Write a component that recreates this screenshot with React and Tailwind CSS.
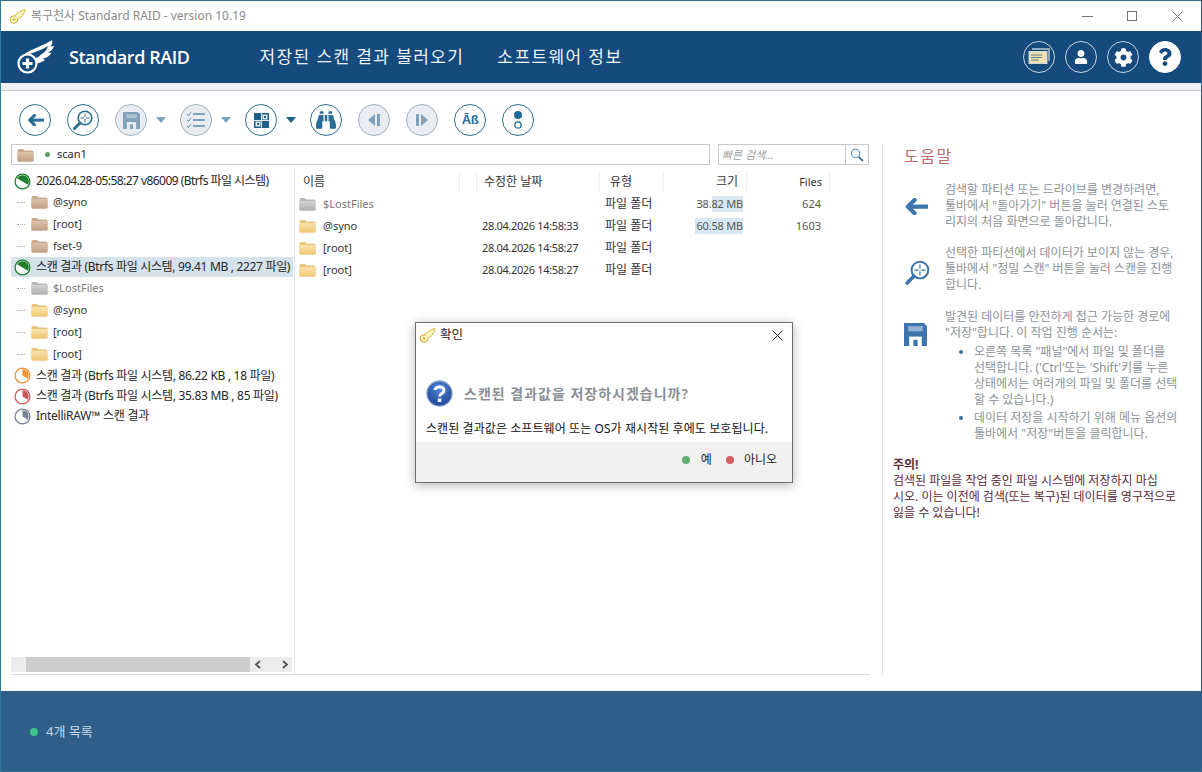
import { FaBinoculars, FaCog, FaUser, FaQuestion } from 'react-icons/fa';

const FONT = "font-['Noto_Sans','Noto_Sans_CJK_KR',sans-serif]";

const treeRows = [
    { kind: 'scan', color: '#1e7f2c', wide: true, text: '2026.04.28-05:58:27 v86009 (Btrfs 파일 시스템)', h: 'h-[20px]', track: 'tracking-[-0.55px]' },
    { kind: 'folder', folder: 'tan', text: '@syno' },
    { kind: 'folder', folder: 'tan', text: '[root]' },
    { kind: 'folder', folder: 'tan', text: 'fset-9' },
    { kind: 'scan', color: '#1e7f2c', wide: true, text: '스캔 결과 (Btrfs 파일 시스템, 99.41 MB , 2227 파일)', h: 'h-[20px]', track: 'tracking-[-0.32px]', selected: true },
    { kind: 'folder', folder: 'gray', text: '$LostFiles', muted: true },
    { kind: 'folder', folder: 'yellow', text: '@syno' },
    { kind: 'folder', folder: 'yellow', text: '[root]' },
    { kind: 'folder', folder: 'yellow', text: '[root]' },
    { kind: 'scan', color: '#ee9233', text: '스캔 결과 (Btrfs 파일 시스템, 86.22 KB , 18 파일)', h: 'h-[21px]', track: 'tracking-[-0.3px]' },
    { kind: 'scan', color: '#cf5b62', text: '스캔 결과 (Btrfs 파일 시스템, 35.83 MB , 85 파일)', h: 'h-[20px]', track: 'tracking-[-0.3px]' },
    { kind: 'scan', color: '#7b8494', text: 'IntelliRAW™ 스캔 결과', h: 'h-[20px]', track: 'tracking-[-0.25px]' },
];

const fileRows = [
    { folder: 'gray', name: '$LostFiles', muted: true, date: '', type: '파일 폴더', size: '38.82 MB', files: '624', hl: 'w-[31px]' },
    { folder: 'yellow', name: '@syno', date: '28.04.2026 14:58:33', type: '파일 폴더', size: '60.58 MB', files: '1603', hl: 'w-[48px]' },
    { folder: 'yellow', name: '[root]', date: '28.04.2026 14:58:27', type: '파일 폴더', size: '', files: '' },
    { folder: 'yellow', name: '[root]', date: '28.04.2026 14:58:27', type: '파일 폴더', size: '', files: '' },
];

const folderColors = {
    tan: ['#dcc3ab', '#c2a083', '#c9a98c'],
    gray: ['#d2d2d2', '#b0b0b0', '#b9b9b9'],
    yellow: ['#fae3ae', '#f1c673', '#e9c47e'],
};

function Folder({ type }) {
    const [top, bottom, tab] = folderColors[type];
    return (
        <svg width="17" height="14" viewBox="0 0 17 14" className="shrink-0">
            <defs>
                <linearGradient id={`folder-${type}`} x1="0" y1="0" x2="0" y2="1">
                    <stop offset="0" stopColor={top} />
                    <stop offset="1" stopColor={bottom} />
                </linearGradient>
            </defs>
            <path d="M0.5 2.5 Q0.5 1 2 1 H6 L7.5 2.5 H15 Q16.5 2.5 16.5 4 V12.5 Q16.5 13.5 15.5 13.5 H1.5 Q0.5 13.5 0.5 12.5 Z" fill={tab} />
            <path d="M0.5 4 H16.5 V12.5 Q16.5 13.5 15.5 13.5 H1.5 Q0.5 13.5 0.5 12.5 Z" fill={`url(#folder-${type})`} />
        </svg>
    );
}

function Pie({ color, wide }) {
    return (
        <svg width="17" height="17" viewBox="0 0 17 17" className="shrink-0">
            <circle cx="8.5" cy="8.5" r="7.4" fill="#fff" stroke={color} strokeWidth="1.3" />
            <path d={wide ? 'M8.5 8.5 L3.04 5.35 A6.3 6.3 0 0 1 13.96 11.65 Z' : 'M8.5 8.5 V2.2 A6.3 6.3 0 0 1 13.96 11.65 Z'} fill={color} />
        </svg>
    );
}

function Wing({ small }) {
    if (small) {
        return (
            <svg width="17" height="17" viewBox="0 0 17 17" className="shrink-0">
                <circle cx="5" cy="11.5" r="3.8" fill="#fff6c8" stroke="#c9a520" strokeWidth="1" />
                <path d="M3.5 11.5 H6.5 M5 10 V13" stroke="#c9a520" strokeWidth="0.9" />
                <path d="M6 7.5 C9 4.5 12 3 16 1.5 C16 4 15 5.5 14 6 C14 7.5 12.5 9 11.5 9 C10.5 10.5 9.5 11 8.5 11" fill="#fff6c8" stroke="#d8b32a" strokeWidth="1" />
            </svg>
        );
    }
    return (
        <svg width="39" height="34" viewBox="0 0 39 34" className="shrink-0">
            <path d="M6 15 C13 9 27 6 35 0 C36 3 35 5 33 6.5 L37 6 C36 9.5 34 11 31 12.5 L34.5 13 C32 16.5 29 18 26 18.5 L28 20 C25 22.5 21 23.5 18 23 L18 20 Z" fill="#fff" />
            <path d="M10 15 C17 12 25 10 31 6 C30 10 27 13 24 14.5 C22 17 19 18.5 15 18.5 Z" fill="#144a7c" />
            <circle cx="10.5" cy="23.5" r="9" fill="#144a7c" stroke="#fff" strokeWidth="2.2" />
            <path d="M5.5 23.5 H15.5 M10.5 18.5 V28.5" stroke="#fff" strokeWidth="3.2" />
        </svg>
    );
}

function ToolButton({ disabled, children }) {
    return (
        <div className={`w-8 h-8 rounded-full border flex items-center justify-center shrink-0 ${disabled ? 'bg-[#e9edf1] border-[#9fb1bf] text-[#7fa2ba]' : 'bg-white border-[#2c6f92] text-[#2a6d94]'}`}>
            {children}
        </div>
    );
}

function Caret({ disabled }) {
    return (
        <div className={`w-0 h-0 -ml-[7px] -mr-[2px] border-x-[5px] border-x-transparent border-t-[6px] ${disabled ? 'border-t-[#7fa2ba]' : 'border-t-[#1f5f8b]'}`} />
    );
}

function Arrow({ width = 17, color = 'currentColor' }) {
    return (
        <svg width={width} height={width * 0.72} viewBox="0 0 25 18" fill="none" stroke={color} strokeWidth="4.4">
            <path d="M25 9 H4" />
            <path d="M11 2 L4 9 L11 16" strokeLinecap="round" strokeLinejoin="round" />
        </svg>
    );
}

function Floppy({ size = 17, color = 'currentColor', bg = '#fff' }) {
    return (
        <svg width={size} height={size} viewBox="0 0 22 22">
            <path d="M0 0 H19 L22 3 V22 H0 Z" fill={color} />
            <rect x="4" y="3" width="14" height="5" fill={bg} opacity="0.45" />
            <rect x="5" y="13" width="12" height="9" fill={bg} />
            <rect x="9" y="16" width="4" height="6" fill={color} />
        </svg>
    );
}

function Magnifier({ size = 22, color = 'currentColor' }) {
    return (
        <svg width={size} height={size} viewBox="0 0 22 22" fill="none" stroke={color}>
            <circle cx="13" cy="9" r="6.8" strokeWidth="1.6" />
            <path d="M13 4.5 V8 M8.5 9 H12 M17.5 9 H14 M13 13.5 V10" strokeWidth="1" />
            <path d="M8 14 L2.5 19.5" strokeWidth="3" strokeLinecap="round" />
        </svg>
    );
}

function HeaderButton({ filled, children }) {
    return (
        <div className={`w-8 h-8 rounded-full border flex items-center justify-center ${filled ? 'bg-white border-white text-[#144a7c]' : 'border-[#c5d4e2] text-white'}`}>
            {children}
        </div>
    );
}

function App() {
    return (
        <div className={`relative w-[1202px] h-[772px] overflow-hidden bg-white flex flex-col border border-t-[#2f6f8c] border-l-[#2a7d9b] border-r-[#2f5f88] border-b-[#2f6f8c] ${FONT}`}>
            {/* Title bar */}
            <div className="h-[30px] shrink-0 flex items-center pl-[8px] text-[12px] text-[#8a8a8a]">
                <Wing small />
                <span className="ml-[5px]">복구천사 Standard RAID - version 10.19</span>
                <div className="ml-auto flex items-center">
                    <div className="w-[11px] h-px bg-[#777] mr-[34px]" />
                    <div className="w-[10px] h-[10px] border border-[#777] mr-[35px]" />
                    <svg width="11" height="11" viewBox="0 0 11 11" className="mr-[18px]"><path d="M0.5 0.5 L10.5 10.5 M10.5 0.5 L0.5 10.5" stroke="#777" /></svg>
                </div>
            </div>

            {/* Header */}
            <div className="h-[52px] shrink-0 bg-[#144a7c] flex items-center pl-[16px] pr-[20px] text-white">
                <Wing />
                <span className="ml-[13px] text-[18px] font-semibold font-['Open_Sans',sans-serif] tracking-[-0.45px]">Standard RAID</span>
                <span className="ml-[70px] text-[17px] tracking-[1.4px] text-[#eef3f8]">저장된 스캔 결과 불러오기</span>
                <span className="ml-[33px] text-[17px] tracking-[1.4px] text-[#eef3f8]">소프트웨어 정보</span>
                <div className="ml-auto flex items-center gap-[10px]">
                    <HeaderButton>
                        <svg width="22" height="18" viewBox="0 0 22 18">
                            <path d="M4 1 H21 V13" fill="none" stroke="#b9c7d4" strokeWidth="1.4" />
                            <rect x="1" y="3.5" width="18" height="12" fill="#f0e2b0" stroke="#cdd6df" />
                            <path d="M3 7 H14 M3 9.5 H14 M3 12 H11" stroke="#5f7b8f" strokeWidth="1.2" />
                        </svg>
                    </HeaderButton>
                    <HeaderButton><FaUser size={14} /></HeaderButton>
                    <HeaderButton><FaCog size={19} /></HeaderButton>
                    <HeaderButton filled><FaQuestion size={18} /></HeaderButton>
                </div>
            </div>
            <div className="h-[8px] shrink-0 bg-[#eff3f5] border-b border-[#c4c8cf]" />

            {/* Toolbar */}
            <div className="h-[53px] shrink-0 pl-[18px] pt-[13px] flex items-start">
                <div className="flex items-center gap-4">
                    <ToolButton><Arrow /></ToolButton>
                    <ToolButton><Magnifier /></ToolButton>
                    <ToolButton disabled><Floppy bg="#e9edf1" /></ToolButton>
                    <Caret disabled />
                    <ToolButton disabled>
                        <svg width="20" height="18" viewBox="0 0 20 18" fill="none" stroke="currentColor">
                            <path d="M7 3 H19 M7 9 H19 M7 15 H19" strokeWidth="2" />
                            <path d="M1 3 L2.5 4.5 L5 1 M1 9 L2.5 10.5 L5 7 M1 15 L2.5 16.5 L5 13" strokeWidth="1.1" />
                        </svg>
                    </ToolButton>
                    <Caret disabled />
                    <ToolButton>
                        <svg width="15" height="15" viewBox="0 0 15 15">
                            <rect width="15" height="15" fill="#1f5f8b" />
                            <rect x="1.5" y="8.5" width="5" height="5" fill="#dfeaf2" />
                            <rect x="8.5" y="1.5" width="5" height="5" fill="#dfeaf2" />
                            <rect x="10" y="3" width="2" height="2" fill="#1f5f8b" />
                            <rect x="3" y="10" width="2" height="2" fill="#1f5f8b" />
                            <rect x="7" y="0" width="1" height="15" fill="#dfeaf2" />
                            <rect x="0" y="7" width="15" height="1" fill="#dfeaf2" />
                        </svg>
                    </ToolButton>
                    <Caret />
                    <ToolButton><FaBinoculars size={20} /></ToolButton>
                    <ToolButton disabled>
                        <svg width="14" height="14" viewBox="0 0 14 14" fill="currentColor"><path d="M8 1 V13 L1 7 Z" /><rect x="10" y="1" width="3" height="12" /></svg>
                    </ToolButton>
                    <ToolButton disabled>
                        <svg width="14" height="14" viewBox="0 0 14 14" fill="currentColor"><rect x="1" y="1" width="3" height="12" /><path d="M6 1 V13 L13 7 Z" /></svg>
                    </ToolButton>
                    <ToolButton><span className="text-[13px] font-bold font-['Liberation_Sans',sans-serif] tracking-[-0.5px]">Āß</span></ToolButton>
                    <ToolButton>
                        <svg width="10" height="20" viewBox="0 0 10 20">
                            <circle cx="5" cy="5" r="4" fill="#1f6b94" />
                            <circle cx="5" cy="15" r="3.2" fill="#fff" stroke="#1f6b94" strokeWidth="1.3" />
                        </svg>
                    </ToolButton>
                </div>
            </div>

            {/* Main area */}
            <div className="h-[532px] shrink-0 flex">
                <div className="w-[882px] shrink-0 border-r border-[#e4e4e4] pl-[10px] pr-[12px] pb-[1px] flex flex-col">
                    {/* Path and search */}
                    <div className="h-[21px] shrink-0 flex gap-[8px] text-[12px]">
                        <div className="w-[699px] border border-[#c8c8c8] flex items-center pl-[5px]">
                            <Folder type="tan" />
                            <span className="w-[5px] h-[5px] rounded-full bg-[#5aa06d] ml-[11px]" />
                            <span className="ml-[7px] text-[11px] text-[#222]">scan1</span>
                        </div>
                        <div className="w-[151px] border border-[#c8c8c8] flex">
                            <span className="flex-1 pl-[3px] text-[11px] italic text-[#a0a0a0] leading-[19px]">빠른 검색...</span>
                            <div className="w-[23px] border-l border-[#c8c8c8] flex items-center justify-center">
                                <svg width="14" height="14" viewBox="0 0 14 14" fill="none">
                                    <circle cx="5.5" cy="5.5" r="4.2" stroke="#4a86c0" strokeWidth="1.1" />
                                    <path d="M8.8 8.8 L13 13" stroke="#4f6f8f" strokeWidth="1.8" />
                                </svg>
                            </div>
                        </div>
                    </div>

                    {/* Tree and file list */}
                    <div className="flex-1 min-h-0 flex pt-[5px] border-b border-[#dedede] text-[12px]">
                        <div className="w-[284px] shrink-0 border-r border-[#e4e4e4] flex flex-col justify-between pb-[2px]">
                            <div className="flex flex-col pt-[1px] pr-[1px]">
                                {treeRows.map((row, i) => row.kind === 'scan' ? (
                                    <div key={i} className={`${row.h} flex items-center pl-[3px] pr-[1px] whitespace-nowrap text-[#262626] ${row.track} ${row.selected ? 'bg-[#d5e1eb]' : ''}`}>
                                        <Pie color={row.color} wide={row.wide} />
                                        <span className="ml-[5px]">{row.text}</span>
                                    </div>
                                ) : (
                                    <div key={i} className="h-[22px] flex items-center pl-[6px]">
                                        <span className="w-[8px] border-t border-dotted border-[#aaa]" />
                                        <span className="ml-[6px]"><Folder type={row.folder} /></span>
                                        <span className={`ml-[5px] text-[11px] ${row.muted ? 'text-[#777]' : 'text-[#333]'}`}>{row.text}</span>
                                    </div>
                                ))}
                            </div>
                            <div className="h-[15px] mr-[2px] bg-[#ececec] flex items-center">
                                <div className="ml-[15px] w-[224px] h-full bg-[#cdcdcd]" />
                                <svg width="8" height="9" viewBox="0 0 8 9" className="ml-[4px]"><path d="M6 1 L2 4.5 L6 8" fill="none" stroke="#555" strokeWidth="1.8" /></svg>
                                <svg width="8" height="9" viewBox="0 0 8 9" className="ml-[19px]"><path d="M2 1 L6 4.5 L2 8" fill="none" stroke="#555" strokeWidth="1.8" /></svg>
                            </div>
                        </div>

                        <div className="flex-1 min-w-0 flex flex-col">
                            <div className="h-[22px] shrink-0 flex items-center text-[#333] mt-[1px]">
                                <span className="w-[165px] pl-[8px] h-[22px] leading-[22px] border-r border-[#eee]">이름</span>
                                <span className="w-[17px] h-[22px] border-r border-[#eee]" />
                                <span className="w-[123px] pl-[7px] h-[22px] leading-[22px] border-r border-[#eee]">수정한 날짜</span>
                                <span className="w-[64px] pl-[10px] h-[22px] leading-[22px] border-r border-[#eee]">유형</span>
                                <span className="w-[83px] pr-[8px] text-right h-[22px] leading-[22px] border-r border-[#eee]">크기</span>
                                <span className="w-[83px] pr-[7px] text-right h-[22px] leading-[22px] border-r border-[#eee] text-[11px]">Files</span>
                            </div>
                            {fileRows.map((row, i) => (
                                <div key={i} className="h-[22px] shrink-0 flex items-center text-[#333]">
                                    <div className="w-[187px] pl-[4px] flex items-center">
                                        <Folder type={row.folder} />
                                        <span className={`ml-[7px] text-[11px] ${row.muted ? 'text-[#777]' : ''}`}>{row.name}</span>
                                    </div>
                                    <span className="w-[123px] text-[11px] tracking-[-0.35px]">{row.date}</span>
                                    <span className="w-[91px]">{row.type}</span>
                                    <div className="relative w-[47px] h-[16px] text-right text-[#555] text-[11px] tracking-[-0.2px] leading-[16px] whitespace-nowrap">
                                        {row.hl && <span className={`absolute right-0 top-0 h-full bg-[#d8e9f5] ${row.hl}`} />}
                                        <span className="relative">{row.size}</span>
                                    </div>
                                    <span className="w-[78px] text-right text-[11px] text-[#555]">{row.files}</span>
                                </div>
                            ))}
                        </div>
                    </div>
                </div>

                {/* Help panel */}
                <div className="flex-1 min-w-0 text-[12px] leading-[16px] text-[#8b9298]">
                    <div className="pl-[21px] h-[38px] text-[16px] leading-[24px] text-[#c0686c] tracking-[1.5px]">도움말</div>
                    <div className="flex h-[63px]">
                        <div className="w-[62px] shrink-0 pl-[21px] pt-[16px]"><Arrow width={24} color="#3c74ad" /></div>
                        <p className="whitespace-nowrap">검색할 파티션 또는 드라이브를 변경하려면,<br />툴바에서 "돌아가기" 버튼을 눌러 연결된 스토<br />리지의 처음 화면으로 돌아갑니다.</p>
                    </div>
                    <div className="flex h-[64px]">
                        <div className="w-[62px] shrink-0 pl-[21px] pt-[14px]"><Magnifier size={27} color="#3c74ad" /></div>
                        <p className="whitespace-nowrap">선택한 파티션에서 데이터가 보이지 않는 경우,<br />툴바에서 "정밀 스캔" 버튼을 눌러 스캔을 진행<br />합니다.</p>
                    </div>
                    <div className="flex">
                        <div className="w-[62px] shrink-0 pl-[21px] pt-[14px]"><Floppy size={23} color="#3c74ad" /></div>
                        <div className="whitespace-nowrap">
                            <p>발견된 데이터를 안전하게 접근 가능한 경로에<br />"저장"합니다. 이 작업 진행 순서는:</p>
                            <ul className="mt-[3px] pl-[29px] list-disc marker:text-[#3f6b90]">
                                <li>오른쪽 목록 "패널"에서 파일 및 폴더를<br />선택합니다. ('Ctrl'또는 'Shift'키를 누른<br />상태에서는 여러개의 파일 및 폴더를 선택<br />할 수 있습니다.)</li>
                                <li className="mt-[2px]">데이터 저장을 시작하기 위해 메뉴 옵션의<br />툴바에서 "저장"버튼을 클릭합니다.</li>
                            </ul>
                        </div>
                    </div>
                    <div className="pl-[10px] mt-[15px] text-[#5a2a3a] whitespace-nowrap">
                        <p className="font-bold">주의!</p>
                        <p>검색된 파일을 작업 중인 파일 시스템에 저장하지 마십<br />시오. 이는 이전에 검색(또는 복구)된 데이터를 영구적으로<br />잃을 수 있습니다!</p>
                    </div>
                </div>
            </div>

            {/* Status bar */}
            <div className="mt-[15px] flex-1 bg-[#2f5f88] flex items-center pl-[29px] pt-[1px] text-[13px] text-[#c9d8e6]">
                <span className="w-[8px] h-[8px] rounded-full bg-[#3cc68a]" />
                <span className="ml-[8px]">4개 목록</span>
            </div>

            {/* Dialog */}
            <div className="absolute left-[414px] top-[321px] w-[378px] h-[161px] bg-white border border-[#6e6e6e] shadow-[0_2px_10px_rgba(0,0,0,0.3)] flex flex-col">
                <div className="h-[24px] shrink-0 flex items-center pl-[3px] pr-[9px] text-[12.5px] text-[#222]">
                    <Wing small />
                    <span className="ml-[4px]">확인</span>
                    <svg width="11" height="11" viewBox="0 0 11 11" className="ml-auto"><path d="M0.5 0.5 L10.5 10.5 M10.5 0.5 L0.5 10.5" stroke="#222" /></svg>
                </div>
                <div className="h-[50px] mt-[21px] shrink-0 flex items-center pl-[10px]">
                    <svg width="27" height="27" viewBox="0 0 27 27">
                        <defs>
                            <radialGradient id="question-bg" cx="0.5" cy="0.3" r="0.8">
                                <stop offset="0" stopColor="#4f86d8" />
                                <stop offset="1" stopColor="#1a3a8c" />
                            </radialGradient>
                        </defs>
                        <circle cx="13.5" cy="13.5" r="12.6" fill="url(#question-bg)" stroke="#8fa8c8" strokeWidth="1.2" />
                        <path d="M9 10 C9 6 18 6 18 10.5 C18 13.5 13.5 13.5 13.5 16.5" fill="none" stroke="#fff" strokeWidth="3" />
                        <rect x="11.8" y="18.5" width="3.5" height="3.5" fill="#fff" />
                    </svg>
                    <span className="ml-[11px] text-[14px] font-semibold text-[#8a8f96] tracking-[1px]">스캔된 결과값을 저장하시겠습니까?</span>
                </div>
                <div className="pl-[10px] mt-[1px] text-[12px] tracking-[0.08px] leading-[20px] text-[#111] whitespace-nowrap">스캔된 결과값은 소프트웨어 또는 OS가 재시작된 후에도 보호됩니다.</div>
                <div className="mt-auto h-[40px] shrink-0 bg-[#f1f1f1] flex items-center justify-end pr-[15px] pb-[5px] text-[12px] text-[#222]">
                    <span className="w-[8px] h-[8px] rounded-full bg-[#62b06e]" />
                    <span className="ml-[11px]">예</span>
                    <span className="ml-[14px] w-[8px] h-[8px] rounded-full bg-[#d85c63]" />
                    <span className="ml-[10px]">아니오</span>
                </div>
            </div>
        </div>
    );
}

export default App;
